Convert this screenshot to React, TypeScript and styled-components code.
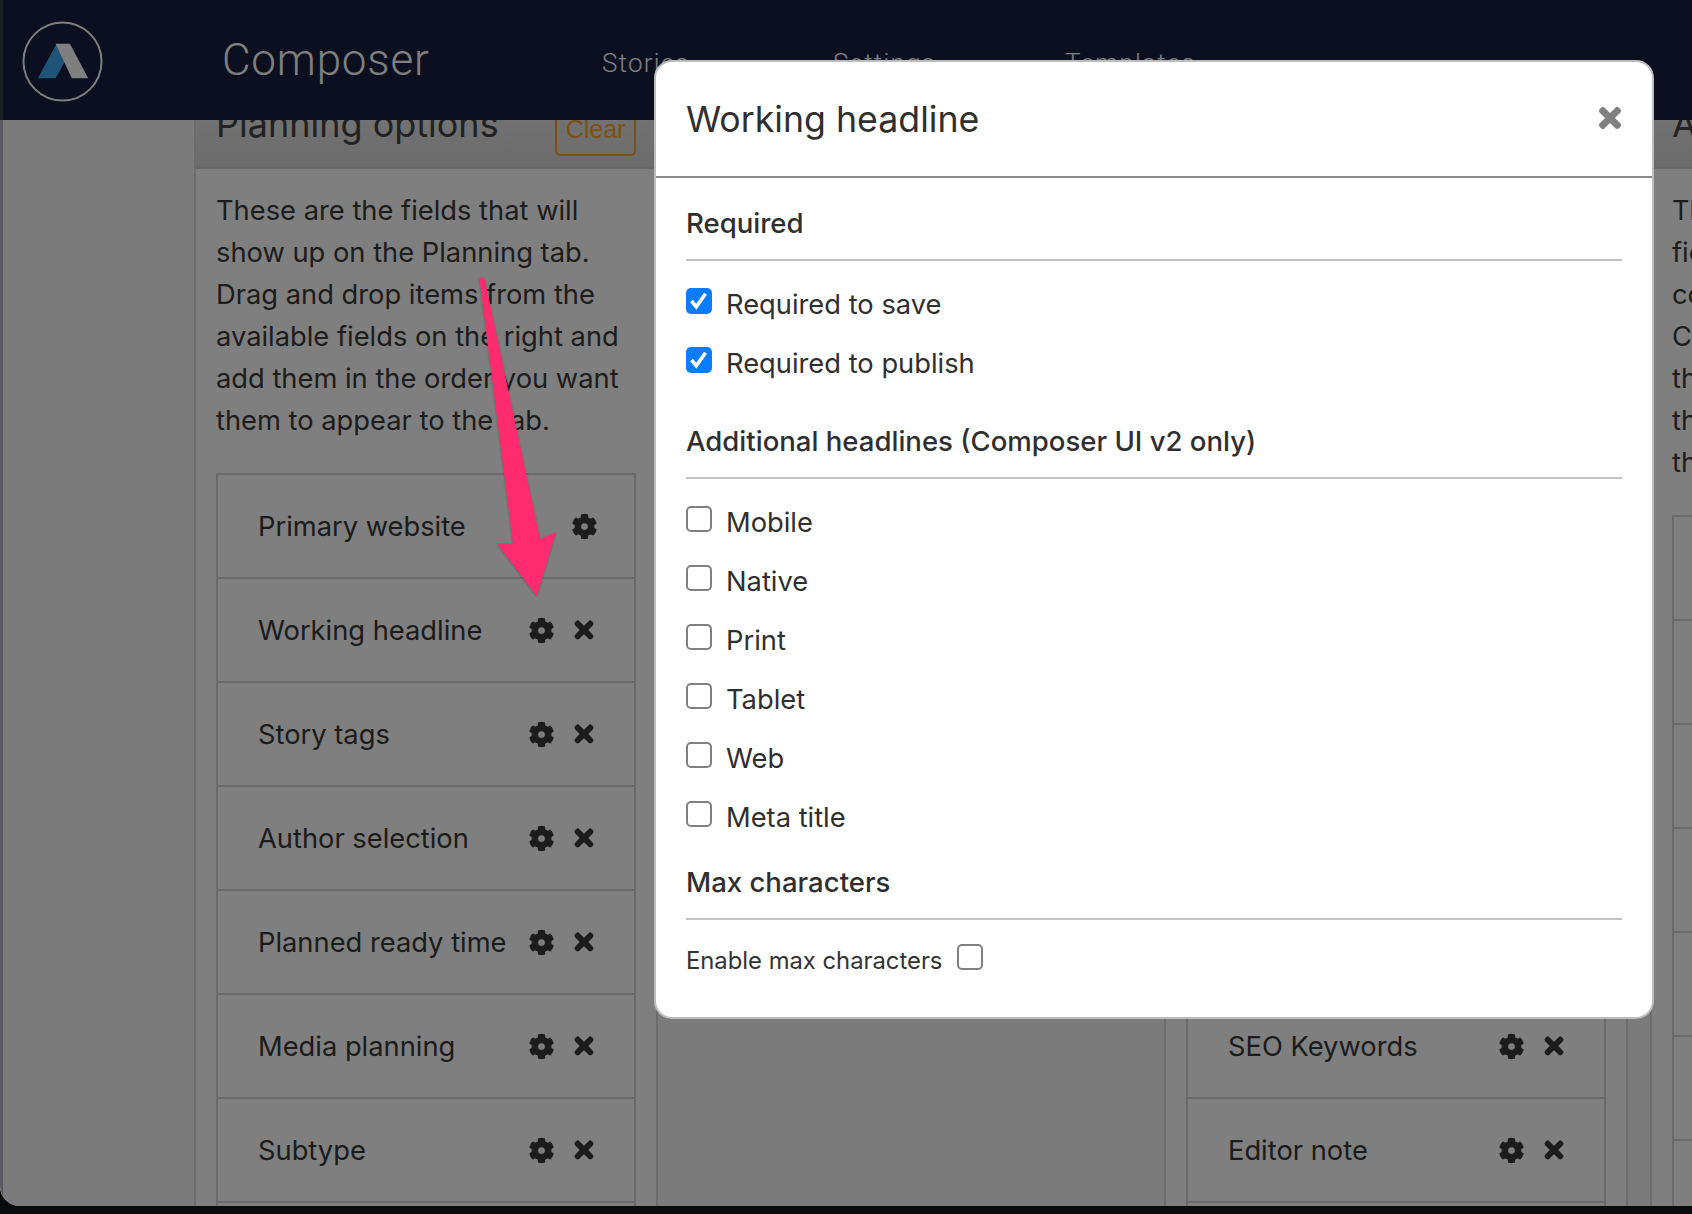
import React from "react";
import styled, { createGlobalStyle } from "styled-components";
import { FaCog, FaTimes } from "react-icons/fa";

const Global = createGlobalStyle`
  html, body { margin: 0; padding: 0; height: 100%; background: #0a0b0d; overflow: hidden; }
  #root { height: 1214px; }
  * { box-sizing: border-box; }
  body { font-family: Inter, "Liberation Sans", sans-serif; color: #383838; }
`;

const AppWindow = styled.div`
  position: relative;
  height: 1206px;
  display: flex;
  flex-direction: column;
  overflow: hidden;
  background: #f6f6f6;
  border-bottom-left-radius: 20px;
`;

const TopBar = styled.header`
  position: relative;
  z-index: 1;
  flex: none;
  height: 120px;
  display: flex;
  align-items: center;
  background: #161e40;
  border-left: 3px solid #383c50;
`;

const LogoMark = styled.svg`
  flex: none;
  width: 81px;
  height: 81px;
  margin: 3px 0 0 19px;
`;

const Brand = styled.div`
  flex: none;
  margin-left: 119px;
  width: 380px;
  font-family: Roboto, sans-serif;
  font-weight: 300;
  font-size: 44px;
  letter-spacing: 0.8px;
  color: #fff;
`;

const NavItem = styled.a<{ $w: number }>`
  flex: none;
  width: ${(p) => p.$w}px;
  font-family: Roboto, sans-serif;
  font-weight: 300;
  font-size: 26px;
  letter-spacing: 1.2px;
  color: #fff;
  margin-top: 6px;
`;

const Workspace = styled.main`
  flex: 1;
  min-height: 0;
  overflow: hidden;
  border-left: 3px solid #b4b6c0;
`;

const ScrolledRow = styled.div`
  display: flex;
  margin-top: -30px;
  padding-left: 191px;
`;

const Panel = styled.section`
  flex: none;
  width: 464px;
  background: #fff;
  border-left: 2px solid #d8d8d8;
  border-right: 2px solid #d8d8d8;
`;

const Gap = styled.div<{ $w: number }>`
  flex: none;
  width: ${(p) => p.$w}px;
`;

const PanelHead = styled.div`
  height: 79px;
  display: flex;
  align-items: center;
  justify-content: space-between;
  padding: 0 20px;
  background: linear-gradient(#ececec, #d8d8d8);
  border-bottom: 2px solid #cfcfcf;
`;

const PanelTitle = styled.h2`
  margin: -9px 0 0;
  font-size: 36px;
  font-weight: 400;
  line-height: 40px;
  color: #444;
  white-space: nowrap;
`;

const ClearButton = styled.button`
  flex: none;
  height: 52px;
  width: 81px;
  margin-top: 2px;
  padding: 0;
  border: 2px solid #f0a030;
  border-radius: 5px;
  background: transparent;
  color: #f5a02c;
  font-family: "Liberation Sans", sans-serif;
  font-size: 25px;
`;

const PanelBody = styled.div`
  padding: 21px 20px 0;
`;

const Intro = styled.p`
  margin: 0 0 31px;
  font-size: 27.3px;
  line-height: 42px;
  color: #3a3a3a;
  white-space: nowrap;
`;

const IntroLine = styled.span`
  display: block;
`;

const FieldList = styled.div`
  border: 2px solid #d4d4d4;
  border-bottom: 0;
`;

const FieldRow = styled.div`
  height: 104px;
  display: flex;
  align-items: center;
  justify-content: space-between;
  padding: 0 38px 0 40px;
  border-bottom: 2px solid #d4d4d4;
  font-size: 27.3px;
  color: #383838;
`;

const RowIcons = styled.div`
  display: flex;
  gap: 19px;
`;

const IconSlot = styled.span`
  width: 24px;
  height: 24px;
  display: flex;
  align-items: center;
  justify-content: center;
  color: #383838;
  svg {
    stroke: currentColor;
    stroke-width: 22;
    overflow: visible;
  }
`;

const Backdrop = styled.div`
  position: absolute;
  inset: 0;
  z-index: 2;
  background: rgba(0, 0, 0, 0.5);
`;

const Modal = styled.div`
  position: absolute;
  z-index: 3;
  left: 654px;
  top: 60px;
  width: 1000px;
  height: 959px;
  background: #fff;
  border: 2px solid #bdbdbd;
  border-radius: 18px;
  color: #2f2f2f;
`;

const ModalHead = styled.div`
  height: 116px;
  display: flex;
  align-items: center;
  justify-content: space-between;
  padding: 0 27px 0 30px;
  border-bottom: 2px solid #8a8a8a;
`;

const ModalTitle = styled.h3`
  margin: 0;
  font-size: 35.7px;
  font-weight: 400;
  color: #2f2f2f;
`;

const CloseButton = styled.span`
  display: flex;
  margin-top: -2px;
  color: #808080;
  svg {
    stroke: currentColor;
    stroke-width: 24;
    overflow: visible;
  }
`;

const ModalBody = styled.div`
  padding: 25px 30px 0 30px;
`;

const SectionHead = styled.h4<{ $top?: number }>`
  margin: ${(p) => p.$top ?? 0}px 0 0;
  padding-bottom: 15px;
  line-height: 41px;
  font-size: 27.55px;
  font-weight: 500;
  color: #2f2f2f;
  border-bottom: 2px solid #c4c4c4;
`;

const Options = styled.div`
  padding-top: 27px;
`;

const OptionRow = styled.label`
  height: 59px;
  display: flex;
  gap: 14px;
  font-size: 27.3px;
  line-height: 34px;
  color: #2f2f2f;
`;

const CheckBox = styled.span<{ $on?: boolean }>`
  flex: none;
  width: 26px;
  height: 26px;
  display: flex;
  align-items: center;
  justify-content: center;
  border-radius: 5px;
  border: ${(p) => (p.$on ? "none" : "2px solid #808080")};
  background: ${(p) => (p.$on ? "#0a7cff" : "#fff")};
`;

const InlineOption = styled.label`
  display: flex;
  gap: 15px;
  padding-top: 24px;
  font-size: 23.8px;
  line-height: 34px;
  color: #333;
`;

const Arrow = styled.svg`
  position: absolute;
  z-index: 4;
  left: 470px;
  top: 270px;
  width: 100px;
  height: 340px;
  overflow: visible;
  filter: drop-shadow(0 1px 1px rgba(0, 0, 0, 0.25));
`;

const Row = ({ label, noRemove }: { label: string; noRemove?: boolean }) => (
  <FieldRow>
    <span>{label}</span>
    <RowIcons>
      <IconSlot>
        <FaCog size={25} />
      </IconSlot>
      {!noRemove && (
        <IconSlot>
          <FaTimes size={26} />
        </IconSlot>
      )}
    </RowIcons>
  </FieldRow>
);

const Option = ({ label, on }: { label: string; on?: boolean }) => (
  <OptionRow>
    <CheckBox $on={on}>
      {on && (
        <svg width="26" height="26" viewBox="0 0 26 26">
          <path d="M5.500 13 10.300 18.800 19.500 5.800" fill="none" stroke="#fff" strokeWidth="3.600" />
        </svg>
      )}
    </CheckBox>
    <span>{label}</span>
  </OptionRow>
);

const introA = [
  "These are the fields that will",
  "show up on the Planning tab.",
  "Drag and drop items from the",
  "available fields on the right and",
  "add them in the order you want",
  "them to appear to the tab.",
];
const introC = [
  "These are the available",
  "fields you can use in",
  "configuring the tabs of",
  "Composer. Drag them to",
  "the lists on the left and",
  "then set their options",
  "there as you need.",
];

const planning = ["Working headline", "Story tags", "Author selection", "Planned ready time", "Media planning", "Subtype", "Slug"];
const middle = ["Sub headline", "Canonical URL", "Section", "Sponsored", "Content notes", "SEO Keywords", "Editor note", "Related"];
const available = ["Description", "Byline", "Categories", "Location", "Credits", "Workflow", "Budget"];

export default function App() {
  return (
    <AppWindow>
      <Global />
      <TopBar>
        <LogoMark viewBox="0 0 82 82">
          <circle cx="41" cy="41" r="39.500" fill="none" stroke="#fff" strokeWidth="2" />
          <path d="M16 58 35 23 44 40 34 58Z" fill="#3fa8f0" />
          <path d="M34 23H48.500L67 58H50.500Z" fill="#fff" />
        </LogoMark>
        <Brand>Composer</Brand>
        <NavItem $w={231}>Stories</NavItem>
        <NavItem $w={232}>Settings</NavItem>
        <NavItem $w={160}>Templates</NavItem>
      </TopBar>
      <Workspace>
        <ScrolledRow>
          <Panel>
            <PanelHead>
              <PanelTitle>Planning options</PanelTitle>
              <ClearButton>Clear</ClearButton>
            </PanelHead>
            <PanelBody>
              <Intro>
                {introA.map((l) => (
                  <IntroLine key={l}>{l}</IntroLine>
                ))}
              </Intro>
              <FieldList>
                <Row label="Primary website" noRemove />
                {planning.map((l) => (
                  <Row key={l} label={l} />
                ))}
              </FieldList>
            </PanelBody>
          </Panel>
          <Gap $w={506} />
          <Panel>
            <PanelHead>
              <PanelTitle>Story options</PanelTitle>
            </PanelHead>
            <PanelBody>
              <Intro>
                {introA.map((l) => (
                  <IntroLine key={l}>{l}</IntroLine>
                ))}
              </Intro>
              <FieldList>
                {middle.map((l) => (
                  <Row key={l} label={l} />
                ))}
              </FieldList>
            </PanelBody>
          </Panel>
          <Gap $w={22} />
          <Panel>
            <PanelHead>
              <PanelTitle>Available fields</PanelTitle>
            </PanelHead>
            <PanelBody>
              <Intro>
                {introC.map((l) => (
                  <IntroLine key={l}>{l}</IntroLine>
                ))}
              </Intro>
              <FieldList>
                {available.map((l) => (
                  <Row key={l} label={l} />
                ))}
              </FieldList>
            </PanelBody>
          </Panel>
        </ScrolledRow>
      </Workspace>
      <Backdrop />
      <Modal>
        <ModalHead>
          <ModalTitle>Working headline</ModalTitle>
          <CloseButton>
            <FaTimes size={30} />
          </CloseButton>
        </ModalHead>
        <ModalBody>
          <SectionHead>Required</SectionHead>
          <Options>
            <Option label="Required to save" on />
            <Option label="Required to publish" on />
          </Options>
          <SectionHead $top={15}>Additional headlines (Composer UI v2 only)</SectionHead>
          <Options>
            <Option label="Mobile" />
            <Option label="Native" />
            <Option label="Print" />
            <Option label="Tablet" />
            <Option label="Web" />
            <Option label="Meta title" />
          </Options>
          <SectionHead $top={2}>Max characters</SectionHead>
          <InlineOption>
            <span>Enable max characters</span>
            <CheckBox />
          </InlineOption>
        </ModalBody>
      </Modal>
      <Arrow viewBox="0 0 100 340">
        <path
          d="M9.500 9 C10.500 7 14 7 14.500 8.500 L70 269 L86 262 L66.700 326 L26.700 273 L43 274 Z"
          fill="#fe2c6e"
        />
      </Arrow>
    </AppWindow>
  );
}
